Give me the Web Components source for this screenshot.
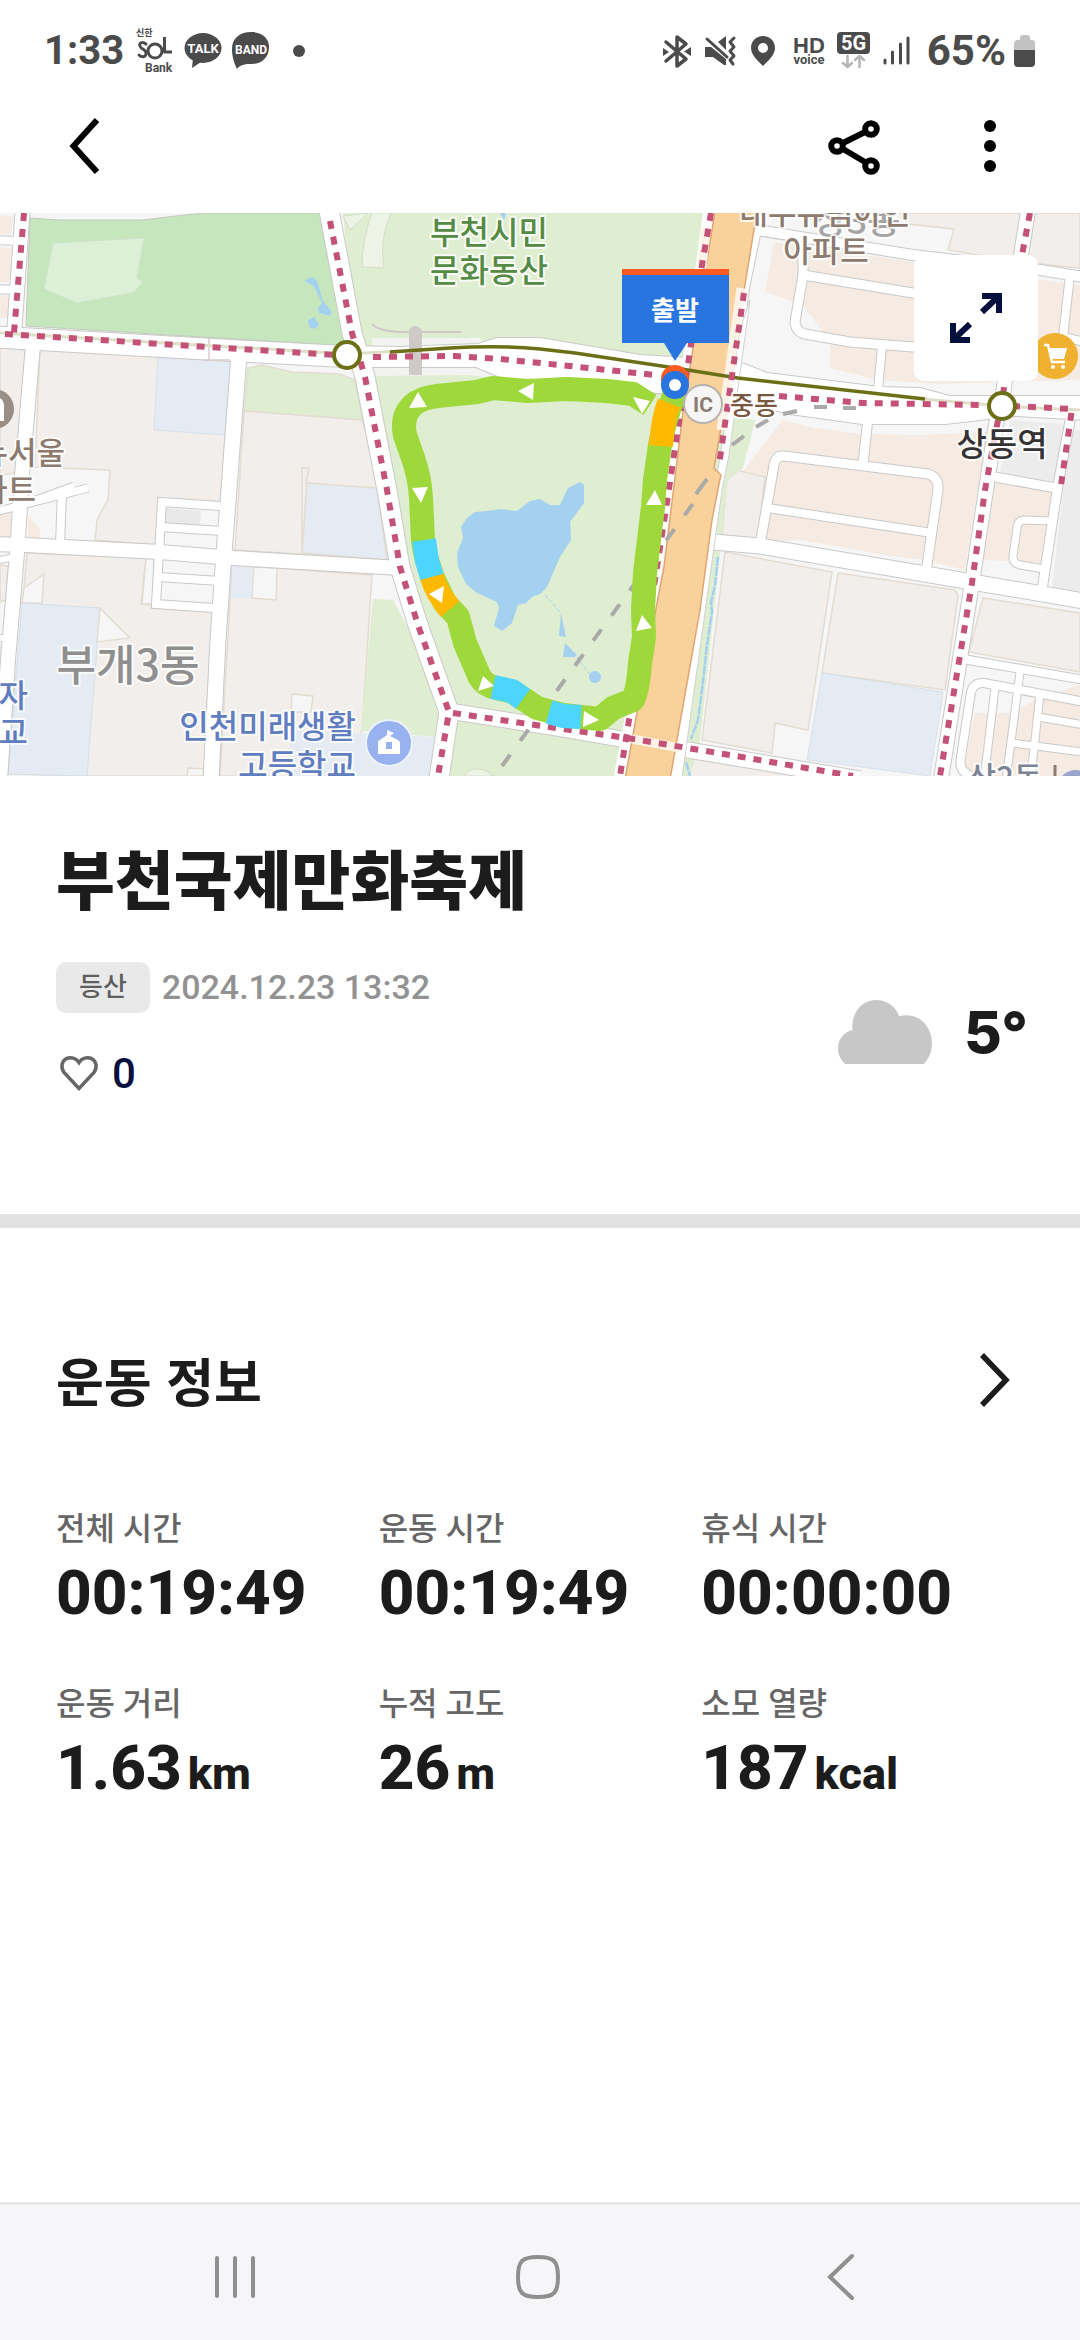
<!DOCTYPE html>
<html lang="ko">
<head>
<meta charset="utf-8">
<meta name="viewport" content="width=device-width, initial-scale=1">
<title>부천국제만화축제</title>
<style>
  html, body { margin: 0; background: #fff; }
  body {
    font-family: Roboto, "Noto Sans CJK KR", sans-serif;
    color: #1c1c1c;
    --ink: #1c1c1c;
    --muted: #666;
    --navy: #05103f;
    --gutter: 56px;
  }
</style>
</head>
<body>
<workout-page></workout-page>

<script>
const define = (name, html, setup) => customElements.define(name, class extends HTMLElement {
  constructor() {
    super();
    const t = document.createElement('template');
    t.innerHTML = html;
    this.attachShadow({ mode: 'open' }).append(t.content.cloneNode(true));
  }
  connectedCallback() { if (setup) setup(this, this.shadowRoot); }
});

/* ---------- status bar ---------- */
define('status-bar', `
<style>
  :host { display: flex; justify-content: space-between; align-items: center; box-sizing: border-box;
    height: 78px; padding: 24px 44px 0; color: #4b4b4b; font-size: 42px; font-weight: 700; line-height: 48px; }
  div { display: flex; align-items: center; gap: 10px; }
  time { font-size: 40px; }
  .power { gap: 8px; margin-left: 4px; }
  svg { display: block; fill: #4b4b4b; }
  .line { fill: none; stroke: #4b4b4b; stroke-width: 4; stroke-linecap: round; stroke-linejoin: round; }
  text { font-family: Roboto, "Noto Sans CJK KR", sans-serif; font-weight: 700; }
</style>
<div>
  <time>1:33</time>
  <svg width="40" height="46" viewBox="135 29 40 46" aria-hidden="true">
    <text x="137" y="37" font-size="9" font-weight="500">신한</text>
    <path class="line" style="stroke-width:3" d="M147 45C143 42 140 44 141 47C142 51 148 50 147 55C146 59 142 58 140 56"/>
    <circle class="line" style="stroke-width:3" cx="156" cy="52" r="7"/>
    <path class="line" style="stroke-width:3;stroke-linecap:butt" d="M165.500 38V53H173"/>
    <text x="146" y="73" font-size="12">Bank</text>
  </svg>
  <svg width="38" height="46" viewBox="184 29 38 46" aria-hidden="true">
    <ellipse cx="203" cy="49" rx="18.500" ry="15"/><path d="M193 59L192 69L204 61Z"/>
    <text x="203" y="54" font-size="13" fill="#fff" text-anchor="middle">TALK</text>
  </svg>
  <svg width="38" height="46" viewBox="232 29 38 46" aria-hidden="true">
    <path d="M251 33C263 33 269 40 269 48C269 58 262 65 252 65C246 65 241 65 237 70C233 62 232 55 232 50C232 39 240 33 251 33Z"/>
    <text x="251" y="55" font-size="12" fill="#fff" text-anchor="middle">BAND</text>
  </svg>
  <svg width="36" height="46" viewBox="280 29 36 46" aria-hidden="true"><circle cx="299" cy="52" r="6"/></svg>
</div>
<div>
  <svg width="32" height="38" viewBox="660 32 32 38" aria-hidden="true">
    <path class="line" style="stroke-width:3.500" d="M665 42L685 59L676 66V37L685 44L665 61"/><path d="M662 48L668 52L662 56ZM690 47L683 51.500L690 56Z"/>
  </svg>
  <svg width="34" height="38" viewBox="702 32 34 38" aria-hidden="true">
    <path d="M704 47H710L725 59V65H723L712 57H704Q704 52 704 47ZM717 42L725 36V50Z"/>
    <path class="line" style="stroke-width:3" d="M706 39L726 57M733 38L729 42L733 47L729 51L733 56L729 60L732 64"/>
  </svg>
  <svg width="32" height="38" viewBox="746 32 32 38" aria-hidden="true">
    <path fill-rule="evenodd" d="M762 36C769 36 774 41 774 48C774 55 767 61 762 66C757 61 750 55 750 48C750 41 755 36 762 36ZM762 43A5 5 0 1 0 762 53A5 5 0 1 0 762 43Z"/>
  </svg>
  <svg width="38" height="38" viewBox="788 32 38 38" aria-hidden="true">
    <text x="808" y="53" font-size="22" text-anchor="middle" style="font-family:'Liberation Sans'">HD</text>
    <text x="808" y="64" font-size="13" text-anchor="middle">voice</text>
  </svg>
  <svg width="34" height="38" viewBox="836 31 34 38" aria-hidden="true">
    <rect x="836" y="31" width="33" height="22" rx="4"/>
    <text x="852.500" y="49" font-size="20" fill="#fff" text-anchor="middle">5G</text>
    <path class="line" style="stroke:#b5b5b5;stroke-width:2.500" d="M846.500 55V66M842 62L846.500 66L851 62M858.500 66V55M854 59L858.500 55L863 59"/>
  </svg>
  <svg width="32" height="38" viewBox="880 32 32 38" aria-hidden="true">
    <path class="line" style="stroke-width:3" d="M884 60V63M891.500 52V63M899.500 44V63M907 38V63"/>
  </svg>
  <div class="power">
    <span>65%</span>
    <svg width="22" height="34" viewBox="1014 34 22 34" aria-hidden="true">
      <path fill="#c2c2c2" d="M1014 50V44Q1014 40 1018 40H1020V38Q1020 35 1023 35H1027Q1030 35 1030 38V40H1032Q1035 40 1035 44V50Z"/>
      <path d="M1014 50H1035V63Q1035 67 1031 67H1018Q1014 67 1014 63Z"/>
    </svg>
  </div>
</div>`);

/* ---------- icon button and app bar ---------- */
define('icon-button', `
<style>
  :host { display: block; }
  button { display: grid; place-items: center; width: 100%; height: 100%; margin: 0; padding: 0; border: 0;
    border-radius: inherit; background: none; color: inherit; cursor: pointer; }
</style>
<button type="button"><slot></slot></button>`, (host, root) => {
  root.querySelector('button').setAttribute('aria-label', host.getAttribute('label'));
});

define('app-bar', `
<style>
  :host { display: flex; align-items: center; box-sizing: border-box; height: 135px; padding: 0 42px 0 36px; color: #000; }
  .space { flex: 1; }
  icon-button { width: 96px; height: 96px; }
  .gap { margin-right: 40px; }
  svg { display: block; fill: none; stroke: currentColor; stroke-width: 6; }
</style>
<icon-button label="뒤로"><svg width="36" height="64" viewBox="66 113 36 64"><path d="M97 119L73.500 145L97 171"/></svg></icon-button>
<span class="space"></span>
<icon-button label="공유" class="gap"><svg width="60" height="64" viewBox="824 113 60 64">
  <path d="M843 142L865 131M843 148L865 161"/><circle cx="837" cy="145" r="5.800"/><circle cx="871" cy="128" r="5.800"/><circle cx="871" cy="165" r="5.800"/></svg></icon-button>
<icon-button label="더보기"><svg width="16" height="64" viewBox="982 113 16 64" style="fill:currentColor;stroke:none">
  <circle cx="990" cy="125" r="6"/><circle cx="990" cy="145" r="6"/><circle cx="990" cy="165" r="6"/></svg></icon-button>`);

/* ---------- route map ---------- */
const poly = (fill, pts, extra = '') => `<polygon fill="${fill}" points="${pts}" ${extra}/>`;
const GREY = '#f1eeeb', BLUE = '#e4ebf3', PEACH = '#f5ebe2', GREEN = '#dfedd0', LIGHT = '#f6f6f6', BORDER = 'stroke="#e3dcd2" stroke-width="1.500"';

const areas = [
  poly(PEACH, '0,215 14,217 11,234 0,234'), poly(PEACH, '0,247 12,248 9,282 0,282'), poly(PEACH, '0,295 9,296 7,318 0,318'),
  poly('#c6e6be', '30,218 60,220 143,220 175,216 205,213 320,213 350,332 346,346 26,326', 'stroke="#c4c9c0"'),
  poly('#dcf0d8', '53,243 144,238 137,278 143,282 134,292 127,294 77,303 44,289', 'stroke="#cfe3ca"'),
  '<path fill="#a5d1f1" d="M304 281L312 277L317 281L323 301L332 312L330 316L319 313L318 308L322 303L314 286ZM308 320L314 317L319 325L315 329L309 327Z"/>',
  poly(GREY, '0,347 25,350 20,472 0,475', BORDER),
  poly(GREY, '40,348 230,360 221,502 160,498 157,545 95,540 97,520 108,500 110,470 35,467', BORDER),
  poly(PEACH, '0,512 12,510 10,538 0,538'), poly(PEACH, '28,515 40,530 40,540 28,540'),
  poly(BLUE, '158,358 231,360 225,435 154,430', 'stroke="#d8e1ea"'),
  poly(GREEN, '248,368 262,365 292,372 340,374 355,380 363,420 244,411', BORDER),
  poly(GREY, '244,411 362,420 386,500 398,560 235,550', BORDER),
  poly(BLUE, '307,483 377,488 387,560 302,553', BORDER), '<path d="M302 552V468H309L306 483" fill="none" stroke="#e3dcd2" stroke-width="1.500"/>',
  poly(GREY, '27,553 146,558 141,604 213,610 205,776 88,776 8,774', BORDER),
  poly(LIGHT, '24,588 44,574 42,603 22,603', BORDER), poly(LIGHT, '146,558 154,558 153,604 142,604', BORDER),
  poly(BLUE, '22,603 100,608 87,776 8,774', 'stroke="#d5dfe8"'), poly(LIGHT, '100,608 130,638 97,642', BORDER),
  poly(BLUE, '0,645 5,645 3,690 0,690'), poly(GREY, '0,565 8,566 6,600 0,602', BORDER),
  poly(GREY, '232,565 372,575 362,730 350,776 220,776', BORDER),
  poly(BLUE, '232,566 253,567 251,598 231,598'), poly(LIGHT, '254,567 277,568 276,600 252,598', BORDER),
  poly(LIGHT, '292,694 313,696 311,712 291,712', BORDER), poly(BLUE, '290,730 437,737 430,776 288,776'),
  poly(LIGHT, '188,768 204,769 203,776 187,776', BORDER),
  poly('#e9e9e9', '166,508 201,511 200,525 165,523'),
  poly(GREEN, '373,599 393,600 450,705 438,737 361,731'),
  poly(GREEN, '343,213 712,213 620,776 440,776 447,700 395,540 355,340'),
  '<path fill="#edf4e5" stroke="#d3ddc8" d="M343 216L350 230L368 213ZM372 213Q362 240 362 267L384 268Q379 240 391 213ZM463 776Q474 764 488 772L494 776Z"/>',
  poly(PEACH, '774,242 913,262 1080,285 1080,380 1000,382 940,384 878,380 830,368 830,342 803,305 765,292'),
  poly(GREY, '880,213 1080,213 1080,268 1020,262 948,250 954,229 888,222', BORDER),
  poly(PEACH, '783,420 815,428 860,434 920,435 987,432 965,570 925,560 765,540 740,475'),
  poly(LIGHT, '765,541 800,540 925,562 960,572 960,585 760,550'),
  poly(GREY, '728,468 765,477 758,541 722,535', BORDER),
  poly(PEACH, '990,478 1055,490 1050,563 982,560'), poly('#ececec', '1010,420 1066,424 1058,484 1000,472'), poly('#ececec', '1070,430 1080,430 1080,592 1052,588'),
  poly(GREY, '725,552 832,572 808,730 775,723 772,753 702,740', BORDER),
  poly(GREY, '838,573 955,590 958,596 945,690 822,673', BORDER),
  poly(BLUE, '822,673 943,692 938,725 930,776 807,760', 'stroke="#d8e1ea"'),
  poly(GREY, '983,598 1080,613 1080,672 969,652', BORDER), poly(GREY, '645,755 853,776 645,776'),
  poly(PEACH, '975,713 1012,713 1034,700 1080,685 1080,776 962,776')
].join('');

/* [width, path] for every street; casings go under all fills so that crossings stay open */
const streets = [
  [14, 'M23 205L14 335'], [8, 'M-5 240L18 241'], [8, 'M-5 289L16 290'],
  [21, 'M-5 337L240 351L335 356L352 356'], [14, 'M33 345L22 475L17 553L8 660L0 780'],
  [15, 'M239 355L228 502L224 553L218 640L211 780'], [14, 'M-5 544L25 545L160 552L233 558L400 568'],
  [8, 'M220 506L162 502L156 604L214 608'], [8, 'M160 527L222 531'], [8, 'M158 577L220 581'],
  [7, 'M-5 512L88 488M36 500L74 486'], [8, 'M62 492L60 545'], [6, 'M-5 561L20 556M-5 638L12 638'],
  [19, 'M328 205L352 333L365 377L387 490L400 567L418 625L449 712L438 785'],
  [15, 'M449 711L563 729L627 740L730 757L860 779'],
  [10, 'M757 230L913 255L1040 270L1090 278'], [9, 'M803 240L803 275L795 322Q796 332 805 334L850 342L913 347L925 347'],
  [9, 'M803 275L925 295'], [8, 'M882 346L878 390'], [8, 'M757 230L745 288L735 370'], [14, 'M1029 205L1021 255L1003 395'],
  [8, 'M1070 275L1063 337L1085 342'], [9, 'M868 418L863 464'],
  [9, 'M760 545L774 465Q776 455 784 456L928 474Q939 477 938 490L926 572'], [8, 'M768 508L932 533'],
  [15, 'M713 542L760 546L925 574L1090 602'], [14, 'M1000 405L995 430L972 583L940 785'],
  [9, 'M995 477L1056 488'], [9, 'M1072 410L1058 485L1042 590'], [7, 'M1050 521L1024 520Q1017 521 1017 528L1013 556Q1012 563 1020 565L1044 569'],
  [8, 'M963 659L1090 681'], [8, 'M972 776Q958 772 961 757L971 692Q974 682 984 683L1090 703'],
  [7, 'M1020 672L1006 780'], [7, 'M995 688L984 780'], [7, 'M1040 694L1031 776'], [7, 'M1038 717L1090 726'], [7, 'M1012 743L1090 753']
];
const mainRoad = 'M345 346L400 347L478 344L497 338L540 338L640 355L690 358L745 364L767 373L880 387L920 388L950 396L1090 396V420L1015 416L945 424H862L790 414L740 402L640 391L560 382L500 377L476 367H345Z';
const casing = streets.map(([w, d]) => `<path d="${d}" stroke-width="${w + 2}"/>`).join('');
const surface = streets.map(([w, d]) => `<path d="${d}" stroke-width="${w}"/>`).join('');
const tri = pts => `<polygon points="${pts}"/>`;

define('route-map', `
<style>
  :host { display: block; position: relative; }
  .map { display: block; width: 100%; height: auto; }
  .expand { position: absolute; top: 42px; right: 42px; width: 124px; height: 126px; border-radius: 10px;
    background: #fff; color: var(--navy); }
  text { font-family: "Noto Sans CJK KR", sans-serif; font-weight: 500; paint-order: stroke; stroke: #fff;
    stroke-opacity: .8; stroke-width: 4px; stroke-linejoin: round; }
  .plain { stroke: none; }
</style>
<svg class="map" viewBox="0 213 1080 563" role="img" aria-label="운동 경로 지도">
  <rect x="0" y="213" width="1080" height="563" fill="${LIGHT}"/>
  ${areas}
  <polygon fill="#f3f3f2" points="372,338 480,338 500,380 470,375 372,376"/>
  <polygon fill="${GREEN}" points="722,415 755,420 743,468 728,480 722,535 700,740 690,776 665,776"/>
  <g fill="none" stroke="#c9c9c8">${casing}<path d="${mainRoad}" stroke-width="2"/></g>
  <g fill="none" stroke="#fff">${surface}</g>
  <path d="${mainRoad}" fill="#fff"/>
  <path d="M372 324Q378 331 400 332H461" fill="none" stroke="#cfc9c8" stroke-width="2"/>
  <path d="M409 330Q415 322 422 330V375H409Z" fill="#cfc9c8"/><path d="M209 338V360M203 360H230" stroke="#d8cdcb" stroke-width="1.500"/>
  <path fill="none" stroke="#a5d1f1" stroke-width="2.500" stroke-dasharray="9 1" d="M718 557L715 585L711 603L712 612L707 645L702 690L698 720L691 739M686 762L690 776"/>
  <path fill="#a5d1f1" d="M500 213H506L504 221ZM475 512L487 511L500 509L517 511L530 501L540 499L550 505L560 505L568 488L580 482L584 485V503L570 522L571 540L560 557L547 587L540 594L532 597L526 603L518 605L512 623L502 631L494 626L499 608L497 602L477 593L466 584L458 567L457 553L463 538L461 527L467 518ZM561 613L566 637L559 636ZM565 643L577 655L575 657H563Z"/>
  <circle cx="595" cy="677" r="6" fill="#a5d1f1"/>
  <path d="M545 595L560 612M577 657L590 675" stroke="#a5d1f1" stroke-dasharray="4 2" fill="none"/>

  <path fill="none" stroke="#fff" stroke-width="12" d="M710 205L689 358L663 520L627 740L618 785"/>
  <path fill="#fff" stroke="#d2d2d0" d="M740 330L750 300L729 455L722 490L681 785H668Z"/>
  <path fill="#f8d29a" stroke="#dfa577" stroke-width="1.500" d="M716 205H758L736 340L714 468L721 475L719 484L712 520L700 610L669 785H624L650 640L664 567L683 412L693 348Z"/>
  <path stroke="#fdf2e7" stroke-width="9" d="M632 739L680 748M706 228L702 268M741 288L721 430"/>
  <g fill="none" stroke="#aaa" stroke-width="4">
    <path stroke-dasharray="14 17" d="M502 766L700 494"/><path d="M696 494L707 479M732 445L744 436M756 427L768 420M783 414L797 411M814 407H827M843 408H856"/>
  </g>
  <path d="M0 333L347 354L400 351M900 397L1002 406L1080 410" fill="none" stroke="#dedfc9" stroke-width="3"/>
  <path d="M390 352L450 348Q500 345 540 349L575 353L675 368L738 378L925 399" fill="none" stroke="#6b7017" stroke-width="3.500"/>
  <g fill="none" stroke="#c45276" stroke-width="6" stroke-dasharray="8 8">
    <path d="M24 213L14 333"/><path d="M5 334L335 355"/><path d="M330 221L352 333L365 377L387 490L400 567L418 625L449 712L438 776"/>
    <path d="M373 357L455 356L500 359L560 365L655 375"/><path d="M779 396L863 403L983 405"/><path d="M1012 406L1072 409L1060 492"/>
    <path d="M453 713L563 729L627 738L730 755L853 776"/><path d="M711 213L702 265L689 358L677 435L667 502L655 580L629 720L620 776"/>
    <path d="M744 293L719 465"/><path d="M1030 213L1022 255L1003 395"/><path d="M998 420L985 490L972 583L940 776"/>
  </g>
  <g fill="#fff" stroke="#6b7017" stroke-width="4"><circle cx="347" cy="355" r="13"/><circle cx="1002" cy="406" r="13"/></g>

  <g fill="none" stroke="#9ed83a" stroke-width="24" stroke-linejoin="round">
    <path d="M650 405L633 394L607 391L567 389L527 391L493 388L477 392L437 396Q421 398 413 405Q401 416 405 435L413 458Q420 478 421 498L423 541L426 557L433 578L445 603L458 617L465 643L478 673Q482 685 497 688L513 692L537 708L563 715L600 719L613 708L633 700Q638 690 640 663L644 637L643 610L645 573L653 507L655 480L660 445L665 422L675 392"/>
    <path stroke="#4dd5ff" d="M424 540L427 561L432 577M493 687L512 691L523 699M549 712L563 716L581 717"/>
    <path stroke="#ffba00" d="M432 577Q436 592 450 609M669 403Q663 418 661 446"/>
  </g>
  <g fill="#fff">${['418,392 427,407 409,408', '518,391 534,383 533,400', '633,397 650,401 642,414', '412,488 428,487 421,503', '655,490 662,505 646,505', '429,594 444,586 442,603', '483,676 494,686 478,691', '584,711 599,720 583,727', '642,615 652,628 636,631'].map(tri).join('')}</g>

  <circle cx="703" cy="404" r="19" fill="#f6f6f6" stroke="#b9b3ae" stroke-width="2"/>
  <text class="plain" x="703" y="412" font-size="21" text-anchor="middle" fill="#8c7b6e" style="font-family:Roboto;font-weight:700">IC</text>
  <circle cx="-6" cy="409" r="20" fill="#9a8f86"/><path d="M-4 421V397Q4 398 4 406V421Z" fill="#fff"/>
  <circle cx="1055" cy="356" r="23" fill="#f0b030"/>
  <path d="M1044 345H1048L1052 362H1065" fill="none" stroke="#fff" stroke-width="2.500"/><path d="M1048 348H1067L1064 359H1051Z" fill="#fff"/><circle cx="1053" cy="367" r="2" fill="#fff"/><circle cx="1063" cy="367" r="2" fill="#fff"/>
  <circle cx="389" cy="743" r="23" fill="#98b1ef" stroke="#eef2fb" stroke-width="2"/>
  <path fill="#fff" fill-rule="evenodd" d="M378 754V742Q378 740 380 740L387 735V730L394 733L390 736L398 740Q400 741 400 743V754ZM386 742V749H392V742Z"/>

  <g fill="#558b45" font-size="32" text-anchor="middle"><text x="489" y="244">부천시민</text><text x="489" y="282">문화동산</text></g>
  <text x="857" y="234" font-size="36" fill="#a5a5a5" text-anchor="middle">상3동</text>
  <g fill="#8c7b6e" font-size="31"><g text-anchor="middle"><text x="825" y="224">대우유림아인</text><text x="826" y="262">아파트</text></g>
    <g text-anchor="end"><text x="65" y="464">뉴서울</text><text x="36" y="501">아파트</text></g></g>
  <text x="754" y="415" font-size="26" text-anchor="middle" fill="#79583f">중동</text>
  <text x="1002" y="456" font-size="33" text-anchor="middle" fill="#333">상동역</text>
  <text x="128" y="681" font-size="43" text-anchor="middle" fill="#8f8f8f">부개3동</text>
  <g fill="#607dbf" font-size="32" text-anchor="end"><text x="28" y="707">자</text><text x="28" y="744">교</text><text x="356" y="738">인천미래생활</text><text x="356" y="777">고등학교</text></g>
  <text x="1005" y="789" font-size="31" text-anchor="middle" fill="#7b8494">상2동</text>
  <path d="M1055 765V776" stroke="#8c7b6e" stroke-width="3"/><circle cx="1076" cy="789" r="19" fill="#9aa5cb"/>

  <path fill="#2975df" d="M622 275H729V343H687L675 361L664 343H622Z"/><rect x="622" y="269" width="107" height="6" fill="#fb5a22"/>
  <text class="plain" x="675" y="320" font-size="26" text-anchor="middle" fill="#fff" style="font-weight:700">출발</text>
  <circle cx="675" cy="379" r="14" fill="#fb5a22"/><circle cx="675" cy="385" r="14" fill="#2975df"/><circle cx="675" cy="385" r="6" fill="#fff"/>
</svg>
<icon-button class="expand" label="지도 확대"><svg width="52" height="52" viewBox="950 292 52 52" fill="none" stroke="currentColor" stroke-width="6">
  <path d="M982 296H999V313M999 296L982 312M953 323V340H970M953 340L970 324"/></svg></icon-button>`);

/* ---------- workout summary ---------- */
define('workout-summary', `
<style>
  :host { display: block; padding: 60px var(--gutter) 116px; border-bottom: 14px solid #e2e2e2; }
  h1 { margin: 0 0 46px; font-size: 64px; line-height: 80px; font-weight: 900; font-family: "Noto Sans CJK KR", sans-serif; }
  .row, .meta, .weather, button { display: flex; align-items: center; }
  .row { justify-content: space-between; }
  .meta { gap: 12px; font-size: 34px; line-height: 51px; font-weight: 500; color: #929292; }
  .chip { padding: 0 23px; border-radius: 10px; background: #e9e9e9; color: #5e5e5e; font-size: 26px; }
  button { gap: 12px; margin: 37px 0 0; padding: 0 2px; border: 0; background: none; color: var(--navy);
    font: 500 42px/48px Roboto, sans-serif; }
  .weather { gap: 32px; margin-right: -4px; padding-top: 4px; font: 800 58px/64px Inter, sans-serif; }
  svg { display: block; }
</style>
<h1><slot name="title"></slot></h1>
<div class="row">
  <div>
    <div class="meta"><span class="chip"><slot name="sport"></slot></span><slot name="date"></slot></div>
    <button type="button" aria-label="좋아요 0"><svg width="42" height="40" viewBox="58 1054 42 40" fill="none" stroke="#666" stroke-width="3.500">
      <path d="M79 1088.500L64 1072.500C60.500 1067.500 61.500 1061 66.500 1058.500C71 1056.800 76 1058 79 1062.500C82 1058 87 1056.800 91.500 1058.500C96.500 1061 97.500 1067.500 94 1072.500Z"/></svg><slot name="likes"></slot></button>
  </div>
  <div class="weather">
    <svg width="94" height="64" viewBox="177 126 279 190" role="img" aria-label="흐림"><path fill="#c7c7c7" d="M199 316C185 304 177 288 177 270C177 243 195 220 220 215C215 165 247 126 291 126C322 126 350 146 358 174C411 160 456 199 456 255C456 279 447 300 431 316Z"/></svg>
    <slot name="temperature"></slot>
  </div>
</div>`);

/* ---------- statistics ---------- */
define('stat-item', `
<style>
  :host { display: block; }
  dl, dt, dd { margin: 0; }
  dt { margin-bottom: 4px; font-size: 32px; line-height: 48px; font-weight: 500; color: var(--muted); }
  dd { font-size: 62px; line-height: 72px; font-weight: 800; white-space: nowrap; }
  small { margin-left: 6px; font-size: 45px; }
</style>
<dl><dt></dt><dd><slot></slot><small></small></dd></dl>`, (host, root) => {
  root.querySelector('dt').textContent = host.getAttribute('label');
  const unit = root.querySelector('small');
  if (host.hasAttribute('unit')) unit.textContent = host.getAttribute('unit'); else unit.remove();
});

define('workout-stats', `
<style>
  :host { display: block; padding: 112px var(--gutter) 48px; }
  header { display: flex; align-items: center; justify-content: space-between; margin-bottom: 85px; }
  h2 { margin: 0; font-size: 52px; line-height: 80px; font-weight: 700; font-family: "Noto Sans CJK KR", sans-serif; }
  icon-button { width: 56px; height: 80px; }
  svg { display: block; }
  .grid { display: grid; grid-template-columns: repeat(3, 1fr); row-gap: 51px; }
</style>
<header>
  <h2>운동 정보</h2>
  <icon-button label="운동 정보 더보기"><svg width="36" height="60" viewBox="978 1350 36 60" fill="none" stroke="currentColor" stroke-width="5.500"><path d="M982 1355L1006 1380L982 1405"/></svg></icon-button>
</header>
<div class="grid"><slot></slot></div>`);

/* ---------- system navigation ---------- */
define('system-nav', `
<style>
  :host { display: grid; grid-template-columns: repeat(3, 1fr); box-sizing: border-box; height: 138px;
    padding: 8px 88px 0 84px; border-top: 3px solid #e9e9e9; background: #f6f6f9; color: #8f8f8f; }
  svg { display: block; fill: none; stroke: currentColor; stroke-width: 4; stroke-linecap: round; }
</style>
<icon-button label="최근 앱"><svg width="44" height="48" viewBox="213 2253 44 48"><path d="M217 2258V2296M235 2258V2296M253 2258V2296"/></svg></icon-button>
<icon-button label="홈"><svg width="48" height="48" viewBox="513 2253 48 48"><path d="M537 2257C553 2257 557 2261 557 2277S553 2297 537 2297S517 2293 517 2277S521 2257 537 2257Z"/></svg></icon-button>
<icon-button label="뒤로"><svg width="30" height="50" viewBox="825 2252 30 50"><path d="M851 2256L829 2277L851 2298"/></svg></icon-button>`);

define('workout-page', `
<style>
  :host { display: flex; flex-direction: column; min-height: 100vh; background: #fff; }
  system-nav { margin-top: auto; }
</style>
<status-bar></status-bar>
<app-bar></app-bar>
<route-map></route-map>
<workout-summary>
  <span slot="title">부천국제만화축제</span><span slot="sport">등산</span>
  <time slot="date">2024.12.23 13:32</time><span slot="likes">0</span><span slot="temperature">5°</span>
</workout-summary>
<workout-stats>
  <stat-item label="전체 시간">00:19:49</stat-item>
  <stat-item label="운동 시간">00:19:49</stat-item>
  <stat-item label="휴식 시간">00:00:00</stat-item>
  <stat-item label="운동 거리" unit="km">1.63</stat-item>
  <stat-item label="누적 고도" unit="m">26</stat-item>
  <stat-item label="소모 열량" unit="kcal">187</stat-item>
</workout-stats>
<system-nav></system-nav>`);
</script>
</body>
</html>
